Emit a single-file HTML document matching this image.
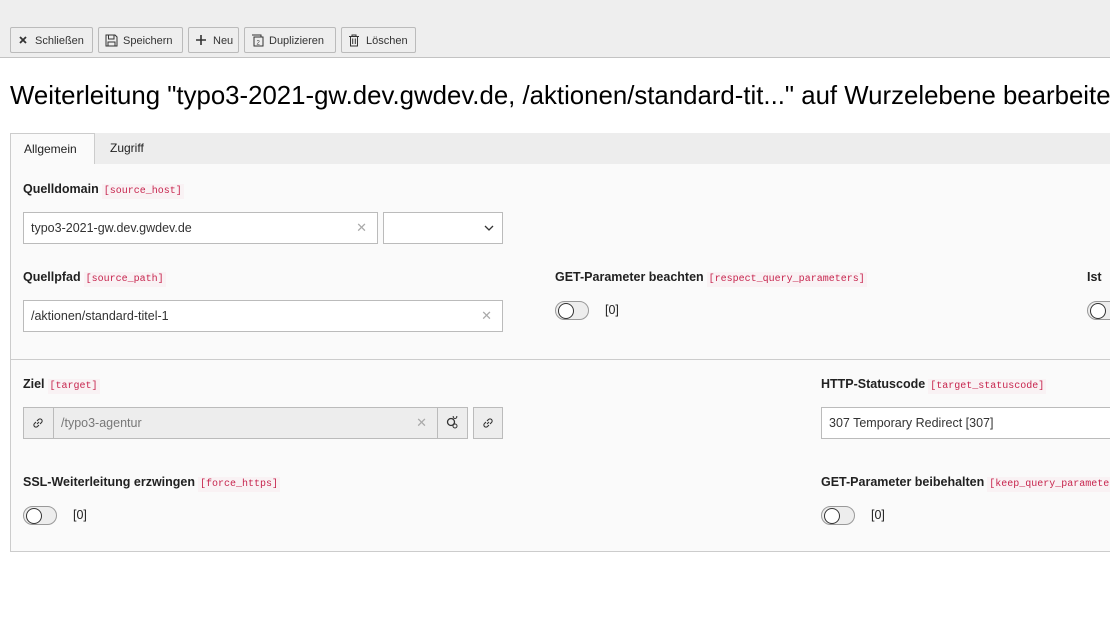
<!DOCTYPE html>
<html><head><meta charset="utf-8"><style>
*{box-sizing:border-box;margin:0;padding:0}
body{width:1110px;height:624px;overflow:hidden;background:#fff;font-family:"Liberation Sans",sans-serif;font-size:12px;color:#212121;position:relative}
.top{position:absolute;left:0;top:0;width:1110px;height:58px;background:#eee;border-bottom:1px solid #c3c3c3}
.btn{position:absolute;top:27px;height:26px;border:1px solid #bbb;background:#eee;border-radius:2px;font-size:11px;line-height:26px;padding-left:24px;color:#333}
.btn svg{position:absolute;left:6px;top:6px}
h1{position:absolute;left:10px;top:82px;font-size:25.8px;font-weight:normal;white-space:nowrap;color:#000}
.tabbar{position:absolute;left:10px;top:133px;width:1100px;height:32px;background:#ededed;border-bottom:1px solid #ccc}
.tab{position:absolute;top:0;height:32px;line-height:31px;font-size:12px;padding:0 13px}
.tab.a{background:#fafafa;border:1px solid #ccc;border-bottom:1px solid #fafafa;left:0;height:32px;width:85px}
.panel{position:absolute;left:10px;top:164px;width:1110px;height:388px;background:#fafafa;border:1px solid #ccc;border-top:none}
.div{position:absolute;left:10px;top:359px;width:1100px;height:1px;background:#ccc}
.lbl{position:absolute;font-weight:bold;font-size:12.5px;white-space:nowrap;margin-top:1px}
.lbl code{font-family:"Liberation Mono",monospace;font-weight:normal;font-size:10px;color:#c7254e;background:#f9f2f4;padding:2px 2px;margin-left:3px}
.inp{position:absolute;height:32px;border:1px solid #bbb;background:#fff;font-size:12.5px;line-height:30px;padding-left:7px;color:#333}
.x{position:absolute;right:10px;top:0;color:#aaa;font-size:13px}
.tg{position:absolute;width:34px;height:19px;border:1px solid #999;border-radius:10px;background:#ededed}
.tg:after{content:"";position:absolute;left:2px;top:1px;width:14px;height:14px;border:1.5px solid #333;border-radius:50%;background:#fff}
.tv{position:absolute;font-size:12.5px;margin-top:1px}
</style></head><body>
<div class="top">
<div class="btn" style="left:10px;width:83px"><svg width="12" height="12" viewBox="0 0 12 12"><path d="M3 3L9 9M9 3L3 9" stroke="#333" stroke-width="1.8"/></svg>Schließen</div>
<div class="btn" style="left:98px;width:85px"><svg width="13" height="13" viewBox="0 0 13 13"><path d="M1 1H10L12 3V12H1Z M3.5 1V5H9V1 M3 12V8H10V12" fill="none" stroke="#333"/></svg>Speichern</div>
<div class="btn" style="left:188px;width:51px"><svg width="12" height="12" viewBox="0 0 12 12"><path d="M6 1V11M1 6H11" stroke="#333" stroke-width="1.6"/></svg>Neu</div>
<div class="btn" style="left:244px;width:92px"><svg width="13" height="13" viewBox="0 0 13 13"><path d="M1 1H10V3M3 3H12V12H3Z" fill="none" stroke="#333"/><text x="5.5" y="10.5" font-size="6" fill="#333">2</text></svg>Duplizieren</div>
<div class="btn" style="left:341px;width:75px"><svg width="12" height="13" viewBox="0 0 12 13"><path d="M1 2.5H11M4 2.5V1H8V2.5M2.5 2.5V12H9.5V2.5M4.7 4.5V10M7.3 4.5V10" fill="none" stroke="#333"/></svg>Löschen</div>
</div>
<h1>Weiterleitung "typo3-2021-gw.dev.gwdev.de, /aktionen/standard-tit..." auf Wurzelebene bearbeiten</h1>
<div class="tabbar"><div class="tab a">Allgemein</div><div class="tab" style="left:87px">Zugriff</div></div>
<div class="panel"></div>
<div class="div"></div>
<div class="lbl" style="left:23px;top:181px">Quelldomain<code>[source_host]</code></div>
<div class="inp" style="left:23px;top:212px;width:355px">typo3-2021-gw.dev.gwdev.de<span class="x">✕</span></div>
<div class="inp" style="left:383px;top:212px;width:120px"><svg style="position:absolute;right:8px;top:12px" width="10" height="7" viewBox="0 0 10 7"><path d="M1 1L5 5L9 1" fill="none" stroke="#333" stroke-width="1.3"/></svg></div>
<div class="lbl" style="left:23px;top:269px">Quellpfad<code>[source_path]</code></div>
<div class="inp" style="left:23px;top:300px;width:480px">/aktionen/standard-titel-1<span class="x">✕</span></div>
<div class="lbl" style="left:555px;top:269px">GET-Parameter beachten<code>[respect_query_parameters]</code></div>
<div class="tg" style="left:555px;top:301px"></div><div class="tv" style="left:605px;top:302px">[0]</div>
<div class="lbl" style="left:1087px;top:269px">Ist</div>
<div class="tg" style="left:1087px;top:301px"></div>
<div class="lbl" style="left:23px;top:376px">Ziel<code>[target]</code></div>
<div class="inp" style="left:23px;top:407px;width:31px;background:#ededed"><svg style="position:absolute;left:8px;top:9px" width="12" height="12" viewBox="0 0 12 12"><path d="M5 7L7 5M4 5L2.5 6.5A2 2 0 0 0 5.5 9.5L7 8M8 7L9.5 5.5A2 2 0 0 0 6.5 2.5L5 4" fill="none" stroke="#333" stroke-width="1.1"/></svg></div>
<div class="inp" style="left:53px;top:407px;width:385px;background:#ededed;color:#777">/typo3-agentur<span class="x">✕</span></div>
<div class="inp" style="left:437px;top:407px;width:31px;background:#ededed"><svg style="position:absolute;left:8px;top:8px" width="14" height="14" viewBox="0 0 14 14"><circle cx="5" cy="6" r="3.5" fill="none" stroke="#333" stroke-width="1.3"/><path d="M9 2.5a1.8 1.8 0 1 1 0.01 0M9 8a2 2 0 1 1 0 4a2 2 0 1 1 0-4" fill="none" stroke="#333"/></svg></div>
<div class="inp" style="left:473px;top:407px;width:30px;background:#ededed"><svg style="position:absolute;left:8px;top:9px" width="12" height="12" viewBox="0 0 12 12"><path d="M5 7L7 5M4 5L2.5 6.5A2 2 0 0 0 5.5 9.5L7 8M8 7L9.5 5.5A2 2 0 0 0 6.5 2.5L5 4" fill="none" stroke="#333" stroke-width="1.1"/></svg></div>
<div class="lbl" style="left:821px;top:376px">HTTP-Statuscode<code>[target_statuscode]</code></div>
<div class="inp" style="left:821px;top:407px;width:300px">307 Temporary Redirect [307]</div>
<div class="lbl" style="left:23px;top:474px">SSL-Weiterleitung erzwingen<code>[force_https]</code></div>
<div class="tg" style="left:23px;top:506px"></div><div class="tv" style="left:73px;top:507px">[0]</div>
<div class="lbl" style="left:821px;top:474px">GET-Parameter beibehalten<code>[keep_query_parameters]</code></div>
<div class="tg" style="left:821px;top:506px"></div><div class="tv" style="left:871px;top:507px">[0]</div>
</body></html>
